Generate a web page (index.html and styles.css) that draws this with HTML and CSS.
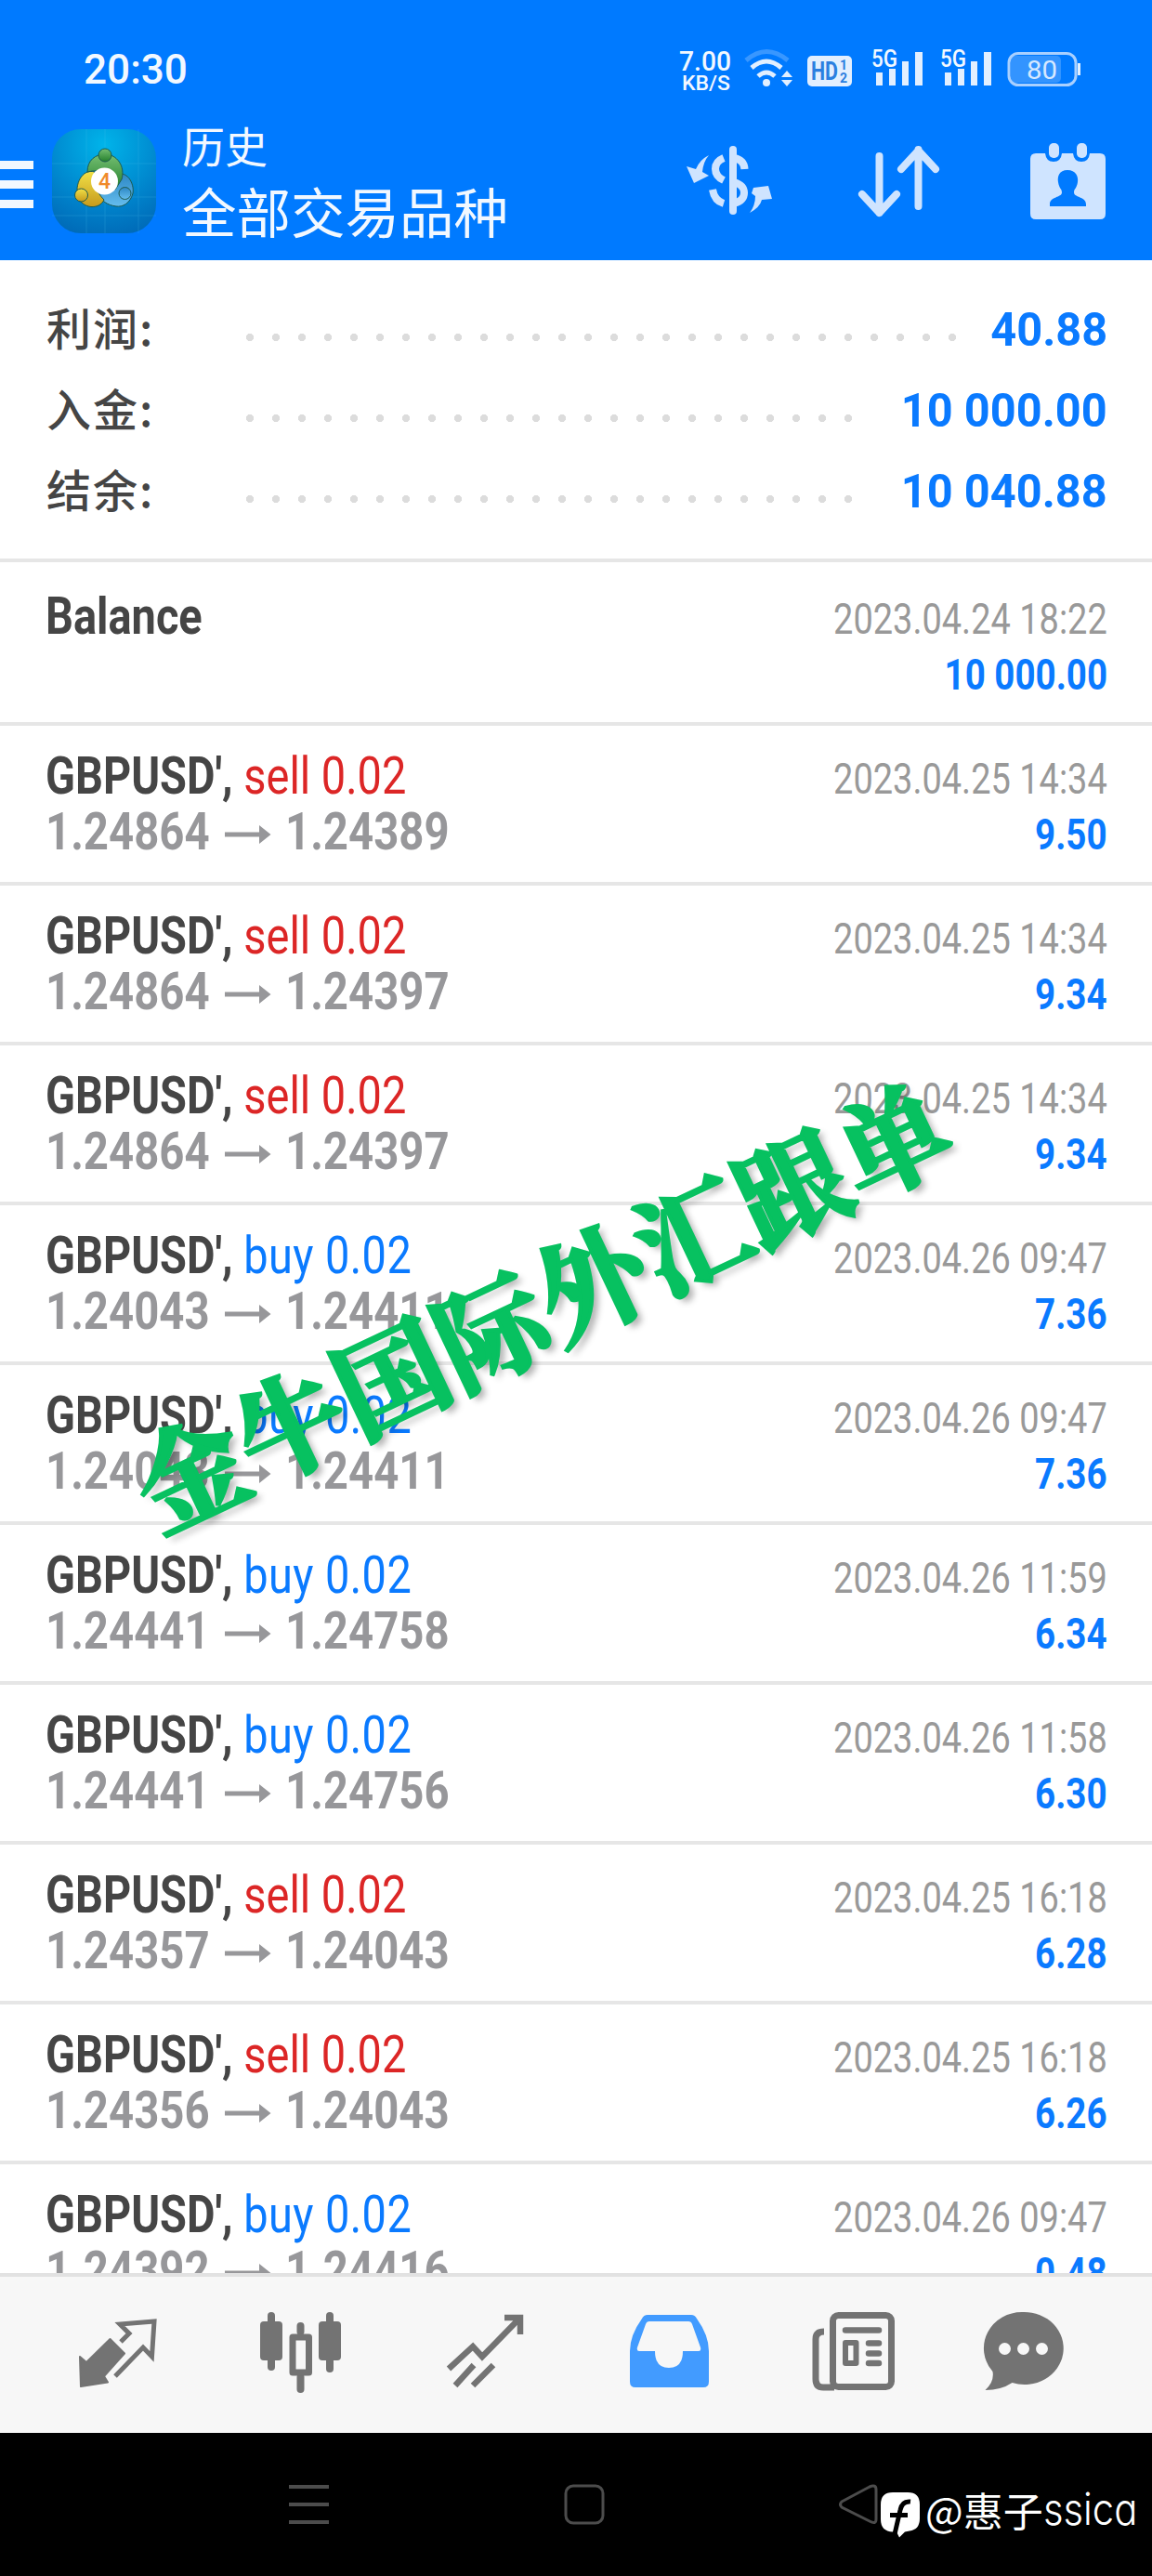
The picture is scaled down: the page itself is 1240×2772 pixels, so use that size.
FILE: index.html
```html
<!DOCTYPE html>
<html lang="zh-CN">
<head>
<meta charset="utf-8">
<title>历史</title>
<link rel="stylesheet" href="styles.css">
</head>
<body>
<div class="screen">
  <header class="header">
    <div class="status">
      <span class="clock">20:30</span>
      <svg class="status-icons" width="440" height="60" viewBox="730 45 440 60">
        <g class="status-text">
          <text x="731" y="76" font-size="30" textLength="56" lengthAdjust="spacingAndGlyphs">7.00</text>
          <text x="734" y="97" font-size="22" textLength="52" lengthAdjust="spacingAndGlyphs">KB/S</text>
          <text x="938" y="72" font-size="25" textLength="28" lengthAdjust="spacingAndGlyphs">5G</text>
          <text x="1012" y="72" font-size="25" textLength="28" lengthAdjust="spacingAndGlyphs">5G</text>
        </g>
        <g fill="none" stroke="#e2efff" stroke-width="5">
          <path d="M803 65Q825 46 848 65" opacity=".25"/>
          <path d="M809 73Q825 59 841 73"/>
          <path d="M816 82Q825 74 834 82"/>
        </g>
        <g fill="#e2efff">
          <circle cx="825" cy="89" r="4"/>
          <path d="M847 76l6 7h-12zM847 93l6-7h-12z"/>
          <rect x="869" y="60" width="48" height="33" rx="5"/>
          <rect x="943" y="78" width="7" height="14"/><rect x="957" y="74" width="7" height="18"/><rect x="971" y="66" width="7" height="26"/><rect x="985" y="56" width="8" height="36"/>
          <rect x="1017" y="78" width="7" height="14"/><rect x="1031" y="74" width="7" height="18"/><rect x="1045" y="66" width="7" height="26"/><rect x="1059" y="56" width="8" height="36"/>
          <rect x="1160" y="68" width="3" height="13"/>
        </g>
        <g class="badge-text">
          <text x="873" y="86" font-size="27" textLength="29" lengthAdjust="spacingAndGlyphs">HD</text>
          <text x="904" y="75" font-size="14">1</text>
          <text x="904" y="89" font-size="14">2</text>
        </g>
        <rect x="1088" y="60" width="54" height="29" rx="5" fill="#fff" opacity=".2"/>
        <rect x="1086" y="57.500" width="72" height="34" rx="10" fill="none" stroke="#a9d0ff" stroke-width="3"/>
        <text class="battery" x="1105" y="84.500" font-size="28" textLength="33" lengthAdjust="spacingAndGlyphs">80</text>
      </svg>
    </div>
    <div class="toolbar">
      <div class="menu"><i></i><i></i><i></i></div>
      <svg class="app-icon" width="112" height="112" viewBox="0 0 112 112">
        <defs>
          <radialGradient id="sky" cx=".5" cy=".15" r=".95"><stop offset="0" stop-color="#00b4ea"/><stop offset=".6" stop-color="#0084cc"/><stop offset="1" stop-color="#0066b4"/></radialGradient>
          <linearGradient id="green" x2="0" y2="1"><stop offset="0" stop-color="#75bf72"/><stop offset="1" stop-color="#24802c"/></linearGradient>
          <linearGradient id="gold" x2="0" y2="1"><stop offset="0" stop-color="#f0e047"/><stop offset="1" stop-color="#c69a1c"/></linearGradient>
          <linearGradient id="blue" x2="0" y2="1"><stop offset="0" stop-color="#2c87c4"/><stop offset="1" stop-color="#65bdee"/></linearGradient>
        </defs>
        <rect width="112" height="112" rx="31" fill="url(#sky)"/>
        <path d="M37 0v112M57 0v112M93 0v112M0 37h112M0 73h112M0 93h112" stroke="#58c7f0" opacity=".2"/>
        <g stroke="#1d5a50" stroke-width="1">
          <path d="M66 50C80 42 89 58 87 69C84 80 76 84 69 83C60 82 53 77 49 70Z" fill="url(#blue)"/>
          <path d="M46 46C32 42 24 60 28 73C33 86 51 87 56 76C48 68 43 57 46 46Z" fill="url(#gold)"/>
          <path d="M38 46C38 33 47 27 57 27C70 27 79 40 75 54L68 65Q60 40 38 46Z" fill="url(#green)"/>
          <circle cx="57" cy="28" r="7" fill="url(#green)"/><circle cx="31.500" cy="71" r="7" fill="url(#gold)"/><circle cx="78.500" cy="69" r="6.500" fill="url(#blue)"/>
        </g>
        <circle cx="56.500" cy="56" r="14.500" fill="#fff"/>
        <text x="56.500" y="64" text-anchor="middle" class="four">4</text>
      </svg>
      <div class="titles"><span class="subtitle">历史</span><span class="title">全部交易品种</span></div>
      <svg class="actions" width="460" height="92" viewBox="735 150 460 92" fill="none" stroke="#cfe4ff">
        <g stroke-width="8">
          <path d="M779 170C767 175 767 188 779 194M767 204Q769 216 779 219"/>
          <path d="M789 161v66" stroke-linecap="round"/>
          <path d="M790 170Q801 172 801.500 182M790 196Q801 199 801 207.500T790 219"/>
        </g>
        <g fill="#cfe4ff" stroke="none">
          <path d="M763 167Q753 172 749 182L739 179L747 197L763 189L756 185Q757 174 763 167z"/>
          <path d="M807 229Q818 223 820 215L831 214L827 200L811 202L809 208L813 211Q813 221 807 229z"/>
        </g>
        <path d="M946.500 168v61M928 209l18.500 20l18.500-20M988.500 222v-61M970 182l18.500-20l18.500 20" stroke-width="8" stroke-linecap="round" stroke-linejoin="round"/>
        <g fill="#cfe4ff" stroke="none">
          <path fill-rule="evenodd" d="M1115 165h10q1 9 9 9t9-9h12q1 9 9 9t9-9h11q6 0 6 6v59q0 6-6 6h-69q-6 0-6-6v-59q0-6 6-6zM1149 183c-9 0-11 7-10 13c1 7 4 7 4 11c0 6-13 4-13 13v2h39v-2c0-9-13-7-13-13c0-4 3-4 4-11c1-6-2-13-11-13z"/>
          <rect x="1129" y="154" width="11" height="16" rx="5"/><rect x="1159" y="154" width="11" height="16" rx="5"/>
        </g>
      </svg>
    </div>
  </header>

  <main class="content">
    <section class="summary">
      <div class="sum"><span class="label">利润:</span><span class="leader long"></span><b>40.88</b></div>
      <div class="sum"><span class="label">入金:</span><span class="leader"></span><b>10 000.00</b></div>
      <div class="sum"><span class="label">结余:</span><span class="leader"></span><b>10 040.88</b></div>
    </section>
    <section class="deals" id="deals">
      <article class="deal balance"><div class="left"><div class="name"><b>Balance</b></div></div><div class="right"><span class="date">2023.04.24 18:22</span><b class="amount">10 000.00</b></div></article>
    </section>
    <div class="stamp">金牛国际外汇跟单</div>
  </main>

  <nav class="tabs">
    <svg width="1240" height="168" viewBox="0 2450 1240 168" fill="none" stroke="#737373">
      <path d="M86 2536l7 6L118.500 2517L134 2532.500L112 2557L116 2563.500L87 2568z" fill="#737373" stroke-width="2" stroke-linejoin="round"/>
      <path d="M130 2520L139 2511L129 2501L166 2498L163.500 2536L154 2526L124 2557" stroke-width="5"/>
      <g fill="#737373" stroke="none">
        <rect x="280" y="2498" width="24" height="42" rx="4"/><rect x="288" y="2488" width="8" height="63" rx="4"/>
        <rect x="343" y="2498" width="24" height="42" rx="4"/><rect x="351" y="2488" width="8" height="65" rx="4"/>
        <rect x="319.500" y="2499" width="8" height="14" rx="4"/><rect x="319.500" y="2554" width="8" height="21" rx="4"/>
      </g>
      <rect x="315" y="2515" width="17.500" height="38" stroke-width="7" stroke-linejoin="round"/>
      <path d="M483 2549L509 2525L519 2536L560 2494M543 2494h17v18M490 2567L510 2545M509 2567L531 2545" stroke-width="6.500"/>
      <path fill="#429bff" stroke="none" fill-rule="evenodd" d="M697 2491h47q4 0 6 4q13 18 13 35v33q0 6-6 6h-73q-6 0-6-6v-33q0-17 13-35q2-4 6-4zM699 2498q-3 0-4 3l-9 25q-1 4 2 4h17q0 18 15 18t15-18h17q3 0 2-4l-9-25q-1-3-4-3z"/>
      <rect x="896.500" y="2491.500" width="63" height="77" rx="6" stroke-width="7"/>
      <path d="M887 2509q-9 0-9 8v43q0 9 8 9h12" stroke-width="7"/>
      <path d="M910 2507.500h36M935 2521.500h11M935 2532.500h11M935 2543h11" stroke-width="6.500" stroke-linecap="round"/>
      <rect x="910" y="2521" width="11.500" height="22" stroke-width="6" stroke-linejoin="round"/>
      <path fill="#737373" stroke="none" d="M1101.500 2488a42 39 0 1 1-12 76q-12 8-29 8q10-9 8-20a41 39 0 0 1 33-64z"/>
      <g fill="#f7f7f7" stroke="none"><circle cx="1081.500" cy="2527.500" r="6.500"/><circle cx="1101.500" cy="2527.500" r="6.500"/><circle cx="1121.500" cy="2527.500" r="6.500"/></g>
    </svg>
  </nav>
  <footer class="system">
    <svg width="680" height="154" viewBox="300 2618 680 154" fill="none" stroke="#4c4c4c" stroke-width="3">
      <path d="M311 2676h43M311 2695h43M311 2714h43" stroke-width="4"/>
      <rect x="609" y="2675" width="40" height="40" rx="8"/>
      <path d="M906 2692L936 2676Q943 2673 943 2679V2711Q943 2717 936 2713L906 2698Q903 2695 906 2692z"/>
    </svg>
    <div class="credit">
      <svg width="42" height="50" viewBox="0 0 42 50"><path d="M13 0h16q13 0 13 13v15q0 12-11 13.500l-5 1-6 6-3-6h-4Q0 42 0 29V13Q0 0 13 0z" fill="#fff"/><path d="M32 10q-9-1-11 9l-6 26M10 24.500h19" fill="none" stroke="#000" stroke-width="5"/></svg>
      <span>@惠子</span><span class="latin">ssica</span>
    </div>
  </footer>
</div>
<script src="deals.js"></script>
</body>
</html>
```
FILE: deals.js
```js
const deals = [
  ["sell", "1.24864", "1.24389", "2023.04.25 14:34", "9.50"],
  ["sell", "1.24864", "1.24397", "2023.04.25 14:34", "9.34"],
  ["sell", "1.24864", "1.24397", "2023.04.25 14:34", "9.34"],
  ["buy", "1.24043", "1.24411", "2023.04.26 09:47", "7.36"],
  ["buy", "1.24043", "1.24411", "2023.04.26 09:47", "7.36"],
  ["buy", "1.24441", "1.24758", "2023.04.26 11:59", "6.34"],
  ["buy", "1.24441", "1.24756", "2023.04.26 11:58", "6.30"],
  ["sell", "1.24357", "1.24043", "2023.04.25 16:18", "6.28"],
  ["sell", "1.24356", "1.24043", "2023.04.25 16:18", "6.26"],
  ["buy", "1.24392", "1.24416", "2023.04.26 09:47", "0.48"]
];
document.getElementById("deals").insertAdjacentHTML("beforeend", deals.map(([side, from, to, date, amount]) => `
  <article class="deal">
    <div class="left">
      <div class="name"><b>GBPUSD',</b> <span class="${side}">${side} 0.02</span></div>
      <div class="prices"><span>${from}</span><svg width="58" height="24" viewBox="0 0 58 24"><path d="M0 9.500h37V2l12.500 10L37 22v-7.500H0z" fill="#97979a"/></svg><span>${to}</span></div>
    </div>
    <div class="right"><span class="date">${date}</span><b class="amount">${amount}</b></div>
  </article>`).join(""));
```
FILE: styles.css
```css
* { box-sizing: border-box; }
body { margin: 0; }
.screen {
  width: 1240px; height: 2772px; overflow: hidden;
  display: flex; flex-direction: column;
  background: #fff; color: #454545;
  font-family: Roboto, "Noto Sans CJK SC", sans-serif;
}
.header { height: 280px; flex: none; background: #007aff; color: #f2f8ff; }
.status { height: 130px; padding: 45px 70px 0 90px; display: flex; justify-content: space-between; }
.clock { font: 500 45px/60px Roboto, sans-serif; transform: scaleX(.98); transform-origin: left; }
.status-text { fill: #f2f8ff; font-weight: 500; }
.badge-text { fill: #2b7fe0; font-weight: 700; }
.battery { fill: #d6e8ff; }
.toolbar { height: 150px; display: flex; padding-right: 45px; }
.menu { width: 36px; margin: 43px 20px 0 0; display: flex; flex-direction: column; gap: 12px; }
.menu i { height: 9px; background: #f2f8ff; }
.app-icon { margin-top: 9px; flex: none; }
.four { font: 500 23px Roboto, sans-serif; fill: #f08a2b; }
.titles { margin: -4px 0 0 28px; flex: 1; display: flex; flex-direction: column; white-space: nowrap; font-family: "Noto Sans CJK SC", sans-serif; }
.subtitle { font-size: 46px; line-height: 58px; }
.title { font-size: 58.500px; line-height: 84px; }
.actions { margin-top: 20px; flex: none; }
.content { position: relative; height: 2166px; flex: none; overflow: hidden; }
.summary { height: 321px; padding: 31px 48px 0 50px; }
.sum { height: 87px; display: flex; align-items: center; }
.label { width: 205px; padding-bottom: 6px; font: 500 48px/81px "Noto Sans CJK SC", sans-serif; letter-spacing: 2px; }
.leader { width: 672px; height: 8px; margin-top: 16px; background: radial-gradient(circle at 14px 4px, #dcdcdc 3.800px, transparent 4.400px) repeat-x 0 0 / 28px 8px; }
.leader.long { width: 784px; }
.sum b { margin-left: auto; color: #0a7aff; font-size: 50px; font-weight: 700; transform: scaleX(.975); transform-origin: right; white-space: nowrap; }
.deal { height: 172px; border-top: 4px solid #e6e6e6; padding: 24px 48px 0 49px; display: flex; justify-content: space-between; }
.deal.balance { height: 176px; padding-top: 28px; }
.left, .right { display: flex; flex-direction: column; line-height: 60px; white-space: nowrap; }
.right { align-items: flex-end; padding-top: 3px; font-size: 47px; }
.name { font-size: 56px; transform: scaleX(.838); transform-origin: left; }
.prices { font-size: 55px; font-weight: 700; color: #97979a; display: flex; align-items: center; height: 60px; }
.prices span { display: block; width: 182px; transform: scaleX(.86); transform-origin: left; }
.prices svg { margin: 6px 7px 0 11px; }
.sell { color: #dc2626; }
.buy { color: #0a7aff; letter-spacing: .500px; }
.date { color: #999; transform: scaleX(.808); transform-origin: right; }
.amount { color: #0a7aff; transform: scaleX(.82); transform-origin: right; }
.stamp {
  position: absolute; left: 101px; top: 1040px; width: 960px; text-align: center; white-space: nowrap;
  font: 700 118px/160px "Noto Serif CJK SC", "Noto Sans CJK SC", serif; color: #07c160;
  letter-spacing: 1.500px;
  -webkit-text-stroke: 4px #07c160;
  text-shadow: 4px 7px 7px rgba(0, 0, 0, .3); transform: rotate(-25.300deg);
}
.tabs { height: 172px; flex: none; border-top: 4px solid #e2e2e2; background: #f7f7f7; }
.tabs svg { display: block; }
.system { height: 154px; flex: none; background: #000; padding-left: 300px; position: relative; }
.credit { position: absolute; left: 948px; top: 58px; display: flex; align-items: flex-start; color: #fff; font: 400 43px/60px "Noto Sans CJK SC", sans-serif; white-space: nowrap; }
.credit svg { margin: 6px 6px 0 0; flex: none; }
.credit span { margin-top: -6px; }
.credit .latin { width: 102px; font: 300 48px/60px Inter, sans-serif; font-feature-settings: "cv11"; transform: scaleX(.87); transform-origin: left; }
```
